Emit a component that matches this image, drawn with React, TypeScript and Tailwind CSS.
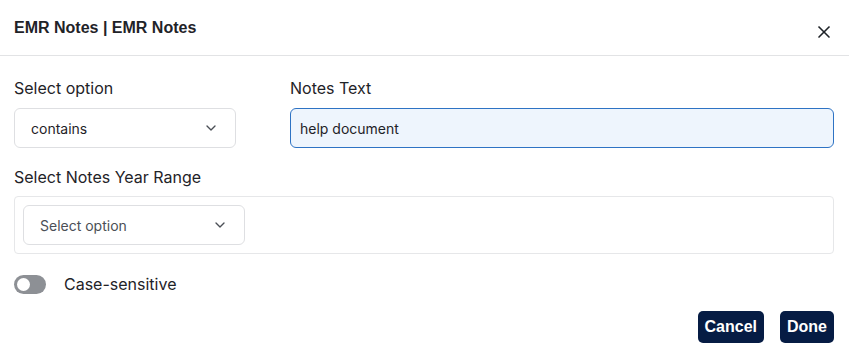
import { X, ChevronDown } from "lucide-react";

function SelectBox({ value, muted }: { value: string; muted?: boolean }) {
  return (
    <div className="flex items-center justify-between h-10 w-[222px] rounded-md border border-[#dedfe2] bg-white pl-4 pr-4">
      <span className={`text-[14px] ${muted ? "text-[#4b4f56]" : "text-[#1f2328]"}`}>{value}</span>
      <ChevronDown size={16} strokeWidth={2} className="text-[#4b4f56]" />
    </div>
  );
}

export default function App() {
  return (
    <main className="w-[849px] h-[362px] bg-white text-[#1f2328] font-['Inter',sans-serif]">
      <header className="flex items-center justify-between h-[56px] pl-[14px] pr-[15px] border-b border-[#e2e3e5]">
        <h1 className="font-['Liberation_Sans',Arial,sans-serif] font-bold text-[16px] pt-[1px]">EMR Notes | EMR Notes</h1>
        <X size={20} strokeWidth={2} className="text-[#1f2328] mt-[8px]" />
      </header>

      <div className="px-[14px] pt-[22px]">
        <div className="flex gap-[54px]">
          <div className="flex flex-col">
            <label className="text-[16px] leading-[20px] mb-[10px]">Select option</label>
            <SelectBox value="contains" />
          </div>
          <div className="flex flex-col flex-1 pr-[1px]">
            <label className="text-[16px] leading-[20px] mb-[10px]">Notes Text</label>
            <div className="flex items-center h-10 rounded-md border border-[#2e73c4] bg-[#eef5fd] px-[9px]">
              <span className="text-[14px]">help document</span>
            </div>
          </div>
        </div>

        <label className="block text-[16px] leading-[20px] mt-[19px] mb-[9px]">Select Notes Year Range</label>
        <div className="rounded-[4px] border border-[#e6e7e9] p-[8px] mr-[1px]">
          <SelectBox value="Select option" muted />
        </div>

        <div className="flex items-center gap-[18px] mt-[18px]">
          <div className="flex items-center w-[32px] h-[19px] rounded-full bg-[#8d9095] px-[3px]">
            <div className="w-[13px] h-[13px] rounded-full bg-white" />
          </div>
          <span className="text-[16px]">Case-sensitive</span>
        </div>

        <div className="flex justify-end gap-[16px] mt-[15px] pr-[1px]">
          <button className="h-[32px] px-[7px] rounded-[5px] bg-[#061c44] text-white text-[16px] font-semibold font-['Liberation_Sans',Arial,sans-serif]">Cancel</button>
          <button className="h-[32px] px-[7px] rounded-[5px] bg-[#061c44] text-white text-[16px] font-semibold font-['Liberation_Sans',Arial,sans-serif]">Done</button>
        </div>
      </div>
    </main>
  );
}
